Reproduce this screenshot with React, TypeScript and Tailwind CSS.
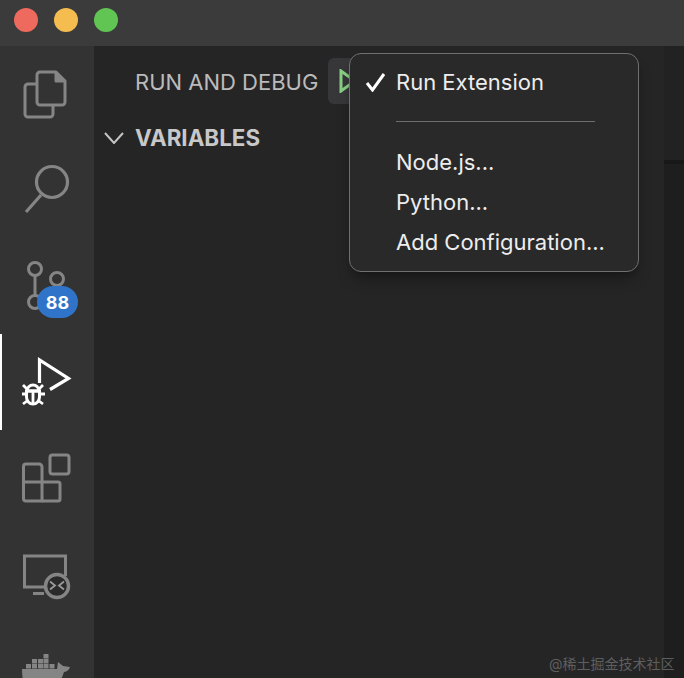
import React from "react";

const iconColor = "#858585";

function FilesIcon() {
  return (
    <svg className="shrink-0" width="94" height="96" viewBox="0 0 94 96" fill="none" stroke={iconColor} strokeWidth="3" strokeLinejoin="round">
      <path d="M37 38H28a3 3 0 0 0-3 3v27a3 3 0 0 0 3 3h22a3 3 0 0 0 3-3v-9" />
      <path d="M40 26h16l9 9v21a3 3 0 0 1-3 3H40a3 3 0 0 1-3-3V29a3 3 0 0 1 3-3z" />
      <path d="M56 26v9h9" fill={iconColor} />
    </svg>
  );
}

function SearchIcon() {
  return (
    <svg className="shrink-0" width="94" height="96" viewBox="0 0 94 96" fill="none" stroke={iconColor} strokeWidth="3.2">
      <circle cx="52" cy="40" r="15.5" />
      <path d="M26 70l15-17" />
    </svg>
  );
}

function BranchIcon() {
  return (
    <svg width="94" height="96" viewBox="0 0 94 96" fill="none" stroke={iconColor} strokeWidth="3">
      <circle cx="35" cy="31" r="6.5" />
      <circle cx="57" cy="41" r="6.5" />
      <circle cx="35" cy="64" r="6.5" />
      <path d="M35 38v19" />
      <path d="M57 48c0 8-14 7-19 11" />
    </svg>
  );
}

function DebugIcon() {
  return (
    <svg width="94" height="96" viewBox="0 0 94 96" fill="none" stroke="#ffffff" strokeWidth="3.2">
      <path d="M39.500 49V26l29 18.500L50 55.500" />
      <path d="M27 57a6 6 0 0 1 12 0z" strokeWidth="3" />
      <path d="M26.500 57h13v6a6.500 7 0 0 1-13 0z" strokeWidth="3" />
      <path d="M33 57v12M23 51l4 4M43 51l-4 4M22 60h4M40 60h5M23 70l4-3M43 70l-4-3" strokeWidth="2.800" />
    </svg>
  );
}

function ExtensionsIcon() {
  return (
    <svg className="shrink-0" width="94" height="96" viewBox="0 0 94 96" fill="none" stroke={iconColor} strokeWidth="3" strokeLinejoin="round">
      <rect x="50" y="25" width="19" height="19" rx="2.500" />
      <path d="M26 34h13a3 3 0 0 1 3 3v34H26a2.500 2.500 0 0 1-2.500-2.500V36.500A2.500 2.500 0 0 1 26 34z" />
      <path d="M23.500 52H58a2 2 0 0 1 2 2v15a2 2 0 0 1-2 2H42" />
    </svg>
  );
}

function RemoteIcon() {
  return (
    <svg className="shrink-0" width="94" height="96" viewBox="0 0 94 96" fill="none" stroke={iconColor} strokeWidth="3">
      <path d="M46 61H24.500V30H65.500v20" />
      <path d="M33 67.500h11" />
      <circle cx="57" cy="60" r="11.500" strokeWidth="3.500" fill="#2a2a2a" />
      <path d="M50 55.500l5 4-5 4M64 55.500l-5 4 5 4" strokeWidth="1.800" stroke="#9a9a9a" />
    </svg>
  );
}

function DockerIcon() {
  return (
    <svg className="shrink-0" width="94" height="96" viewBox="0 0 94 96" fill={iconColor}>
      <rect x="43.500" y="32" width="5" height="4.500" />
      <rect x="32" y="37" width="5" height="4.500" />
      <rect x="38" y="37" width="5" height="4.500" />
      <rect x="43.500" y="37" width="5" height="4.500" />
      <rect x="26" y="42" width="5" height="4.500" />
      <rect x="32" y="42" width="5" height="4.500" />
      <rect x="38" y="42" width="5" height="4.500" />
      <rect x="43.500" y="42" width="5" height="4.500" />
      <rect x="49.500" y="42" width="5" height="4.500" />
      <path d="M22 47h35l1-7 5 4 7 1c-1 3-3 4.500-6 5-3 9-8 20-25 20H26c-2-6-4-14-4-23z" />
    </svg>
  );
}

function ActivityBar() {
  return (
    <div className="flex w-[94px] shrink-0 flex-col bg-[#333333]">
      <FilesIcon />
      <SearchIcon />
      <div className="relative h-[96px] shrink-0">
        <BranchIcon />
        <span className="absolute left-[37px] top-[48px] flex h-[32px] w-[41px] items-center justify-center rounded-full bg-[#2f74c8] text-[18px] font-bold text-white">
          88
        </span>
      </div>
      <div className="h-[96px] shrink-0 border-l-2 border-white">
        <div className="-ml-[2px]">
          <DebugIcon />
        </div>
      </div>
      <ExtensionsIcon />
      <RemoteIcon />
      <DockerIcon />
    </div>
  );
}

function RunMenu() {
  return (
    <div className="absolute left-[349px] top-[53px] w-[290px] rounded-[12px] border border-[#707070] bg-[#29292a] pt-[8px] text-[22px] leading-[40px] text-[#ededed] shadow-lg shadow-black/30">
      <div className="flex items-center pl-[15px]">
        <svg width="22" height="20" viewBox="0 0 22 20" fill="none" stroke="#ffffff" strokeWidth="3">
          <path d="M2 11l5.500 7L19 2" />
        </svg>
        <span className="ml-[9px]">Run Extension</span>
      </div>
      <div className="ml-[46px] mt-[19px] h-px w-[199px] bg-[#6e6e6e]" />
      <div className="mt-[20px] pb-[9px] pl-[46px]">
        <div>Node.js...</div>
        <div>Python...</div>
        <div>Add Configuration...</div>
      </div>
    </div>
  );
}

export default function App() {
  return (
    <div className="relative flex h-[678px] w-[684px] flex-col overflow-hidden bg-[#252526] font-['Inter',sans-serif]">
      <div className="flex h-[46px] shrink-0 items-start gap-[16px] bg-[#3b3b3b] pl-[14px] pt-[8px]">
        <div className="h-[24px] w-[24px] rounded-full bg-[#ee6a5f]" />
        <div className="h-[24px] w-[24px] rounded-full bg-[#f5bd4f]" />
        <div className="h-[24px] w-[24px] rounded-full bg-[#61c554]" />
      </div>
      <div className="flex min-h-0 flex-1">
        <ActivityBar />
        <div className="flex-1 bg-[#252526]">
          <div className="flex h-[71px] items-start pl-[41px] pt-[12px]">
            <span className="mt-[12px] text-[22px] leading-[25px] text-[#bbbbbb]">RUN AND DEBUG</span>
            <div className="ml-[10px] flex h-[46px] w-[40px] items-center rounded-l-[6px] bg-[#37373a] pl-[11px]">
              <svg width="16" height="24" viewBox="0 0 16 24" fill="none" stroke="#89d185" strokeWidth="3">
                <path d="M2 2v20l14-10z" />
              </svg>
            </div>
          </div>
          <div className="flex h-[42px] items-center">
            <svg className="ml-[10px]" width="20" height="12" viewBox="0 0 20 12" fill="none" stroke="#c5c5c5" strokeWidth="2">
              <path d="M1 1l9 10 9-10" />
            </svg>
            <span className="ml-[11px] text-[22.4px] font-bold leading-[42px] text-[#c8c8c8]">VARIABLES</span>
          </div>
        </div>
        <div className="flex w-[20px] shrink-0 flex-col bg-[#1e1e1e]">
          <div className="h-[118px] border-b-4 border-[#181818] bg-[#222222]" />
        </div>
      </div>
      <RunMenu />
      <span className="absolute left-[549px] top-[654px] text-[14px] leading-[20px] text-[#5e5e5e] font-['Inter','Noto_Sans_CJK_SC',sans-serif]">
        @稀土掘金技术社区
      </span>
    </div>
  );
}
